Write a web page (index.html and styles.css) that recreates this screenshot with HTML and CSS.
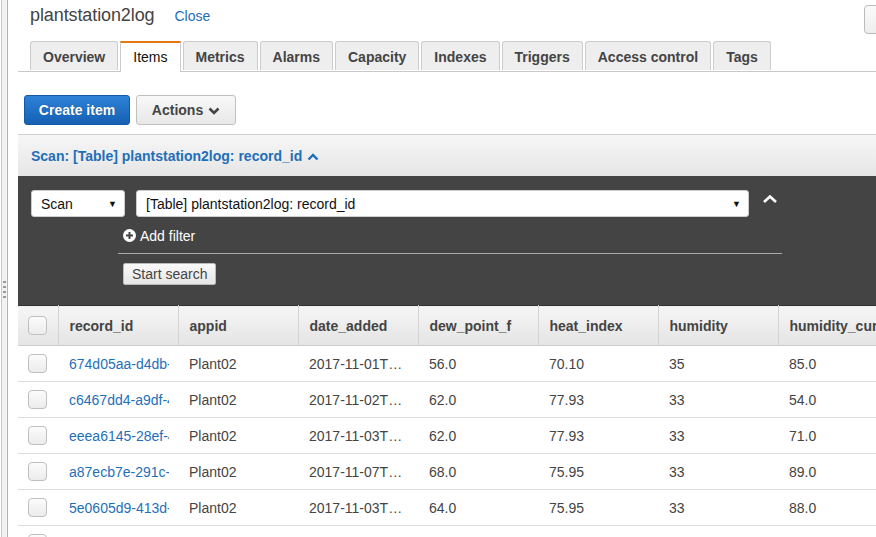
FILE: index.html
```html
<!DOCTYPE html>
<html>
<head>
<meta charset="utf-8">
<link rel="stylesheet" href="styles.css">
</head>
<body>
<div class="layout">
  <div class="splitter"><span class="grip"></span></div>
  <div class="main">
    <div class="header">
      <h1 class="title">plantstation2log</h1>
      <a class="close">Close</a>
      <span class="corner-btn"></span>
    </div>
    <div class="tabs">
      <div class="tab">Overview</div>
      <div class="tab active">Items</div>
      <div class="tab">Metrics</div>
      <div class="tab">Alarms</div>
      <div class="tab">Capacity</div>
      <div class="tab">Indexes</div>
      <div class="tab">Triggers</div>
      <div class="tab">Access control</div>
      <div class="tab">Tags</div>
    </div>
    <div class="toolbar">
      <button class="btn primary">Create item</button>
      <button class="btn secondary">Actions <svg class="chev" width="12" height="8" viewBox="0 0 12 8"><path d="M1.5 1.5 L6 6 L10.5 1.5" fill="none" stroke="#444" stroke-width="2.6"/></svg></button>
    </div>
    <div class="panel">
      <div class="scan-head">Scan: [Table] plantstation2log: record_id <svg class="up" width="12" height="8" viewBox="0 0 12 8"><path d="M1.5 6.5 L6 2 L10.5 6.5" fill="none" stroke="#1f6fb8" stroke-width="2.4"/></svg></div>
      <div class="scan-body">
        <div class="scan-row">
          <div class="select small"><span>Scan</span><span class="arrow">▼</span></div>
          <div class="select wide"><span>[Table] plantstation2log: record_id</span><span class="arrow">▼</span></div>
          <svg class="collapse" width="16" height="10" viewBox="0 0 16 10"><path d="M2 8 L8 2.5 L14 8" fill="none" stroke="#fff" stroke-width="2.6"/></svg>
        </div>
        <div class="filters">
          <div class="add-filter"><svg width="13" height="13" viewBox="0 0 13 13"><circle cx="6.5" cy="6.5" r="6.5" fill="#fff"/><path d="M6.5 3 V10 M3 6.5 H10" stroke="#444" stroke-width="2"/></svg><span>Add filter</span></div>
          <div class="start-wrap"><button class="start">Start search</button></div>
        </div>
      </div>
      <table class="grid">
        <thead>
          <tr>
            <th class="cb"><span class="check"></span></th>
            <th>record_id</th><th>appid</th><th>date_added</th><th>dew_point_f</th><th>heat_index</th><th>humidity</th><th>humidity_current</th>
          </tr>
        </thead>
        <tbody>
          <tr><td class="cb"><span class="check"></span></td><td class="link"><span>674d05aa-d4db-4a1c</span></td><td>Plant02</td><td>2017-11-01T…</td><td>56.0</td><td>70.10</td><td>35</td><td>85.0</td></tr>
          <tr><td class="cb"><span class="check"></span></td><td class="link"><span>c6467dd4-a9df-4b2e</span></td><td>Plant02</td><td>2017-11-02T…</td><td>62.0</td><td>77.93</td><td>33</td><td>54.0</td></tr>
          <tr><td class="cb"><span class="check"></span></td><td class="link"><span>eeea6145-28ef-4c3d</span></td><td>Plant02</td><td>2017-11-03T…</td><td>62.0</td><td>77.93</td><td>33</td><td>71.0</td></tr>
          <tr><td class="cb"><span class="check"></span></td><td class="link"><span>a87ecb7e-291c-4d5f</span></td><td>Plant02</td><td>2017-11-07T…</td><td>68.0</td><td>75.95</td><td>33</td><td>89.0</td></tr>
          <tr><td class="cb"><span class="check"></span></td><td class="link"><span>5e0605d9-413d-4e6a</span></td><td>Plant02</td><td>2017-11-03T…</td><td>64.0</td><td>75.95</td><td>33</td><td>88.0</td></tr>
          <tr><td class="cb"><span class="check"></span></td><td class="link"><span></span></td><td></td><td></td><td></td><td></td><td></td><td></td></tr>
        </tbody>
      </table>
    </div>
  </div>
</div>
</body>
</html>
```
FILE: styles.css
```css
html, body { margin: 0; padding: 0; background: #fff; }
body { width: 876px; height: 537px; overflow: hidden; font-family: "Liberation Sans", Arial, sans-serif; font-size: 14px; color: #444; }
.layout { display: flex; height: 537px; }
.splitter { width: 5px; flex: none; margin-left: 1px; border-left: 1px solid #c8c8c8; border-right: 1px solid #b4b4b4; background: #f2f2f2; display: flex; align-items: center; justify-content: center; }
.grip { width: 3px; height: 18px; margin-top: 42px; background: repeating-linear-gradient(#999 0 2px, transparent 2px 5px); }
.main { flex: 1; min-width: 0; padding-left: 10px; }
.header { display: flex; align-items: baseline; height: 36px; padding: 5px 0 0 12px; box-sizing: border-box; position: relative; }
.title { margin: 0; font-size: 18px; font-weight: normal; color: #444; letter-spacing: -0.1px; }
.close { margin-left: 20px; color: #1f6fb8; font-size: 14px; }
.corner-btn { margin-left: auto; margin-right: -40px; align-self: flex-start; margin-top: 0; width: 50px; height: 27px; border: 1px solid #bbb; border-radius: 4px; background: linear-gradient(#fafafa, #eee); }
.tabs { display: flex; gap: 2px; margin-top: 5px; padding-left: 12px; border-bottom: 1px solid #c8c8c8; height: 30px; }
.tab { height: 29px; padding: 0 12px; box-sizing: border-box; border: 1px solid #ccc; border-bottom: none; border-radius: 3px 3px 0 0; background: #eee; font-weight: bold; line-height: 30px; color: #444; white-space: nowrap; }
.tab.active { background: #fff; height: 31px; border-top: 2px solid #e47911; border-color: #e47911 #ccc #ccc; border-radius: 0; font-weight: normal; color: #111; line-height: 28px; padding: 0 12px; }
.toolbar { display: flex; gap: 6px; margin-top: 23px; padding-left: 6px; }
.btn { height: 30px; border-radius: 3px; font-family: inherit; font-size: 14px; font-weight: bold; padding: 0; box-sizing: border-box; white-space: nowrap; }
.btn.primary { width: 106px; color: #fff; background: linear-gradient(#2d82d8, #1560b3); border: 1px solid #1458a6; text-shadow: 0 0 1px rgba(0,0,0,0.3); }
.btn.secondary { width: 100px; color: #444; background: linear-gradient(#f8f8f8, #e8e8e8); border: 1px solid #c0c0c0; display: flex; align-items: center; justify-content: center; gap: 5px; }
.chev { margin-top: 1px; }
.panel { margin-top: 9px; width: 900px; }
.scan-head { height: 42px; box-sizing: border-box; border-top: 1px solid #d0d0d0; background: linear-gradient(#f6f6f6, #e6e6e6); padding: 13px 0 0 13px; font-size: 14px; font-weight: bold; color: #1f6fb8; }
.up { margin-left: 1px; }
.scan-body { background: #444; height: 129px; box-sizing: border-box; padding: 14px 0 0 13px; }
.scan-row { display: flex; align-items: flex-start; gap: 11px; }
.select { height: 27px; box-sizing: border-box; background: #fff; border: 1px solid #ccc; border-radius: 3px; display: flex; align-items: center; justify-content: space-between; padding: 0 7px 0 9px; font-size: 14px; color: #111; }
.select.small { width: 94px; }
.select.wide { width: 613px; }
.arrow { font-size: 9px; color: #111; }
.collapse { margin-left: 2px; margin-top: 4px; }
.filters { margin-left: 87px; width: 664px; }
.add-filter { display: flex; align-items: center; gap: 4px; color: #fff; font-size: 14px; padding: 12px 0 0 5px; height: 25px; box-sizing: border-box; }
.start-wrap { border-top: 1px solid #aaa; margin-top: 11px; padding: 9px 0 0 5px; }
.start { height: 22px; padding: 0 8px; font-family: inherit; font-size: 14px; color: #444; background: linear-gradient(#fafafa, #e6e6e6); border: 1px solid #bbb; border-radius: 2px; }
.grid { border-collapse: collapse; table-layout: fixed; width: 880px; border-top: 1px solid #333; }
.grid th, .grid td { text-align: left; padding: 0 11px; white-space: nowrap; overflow: hidden; }
.grid th { height: 40px; box-sizing: border-box; background: linear-gradient(#f6f6f6, #e4e4e4); font-weight: bold; color: #444; border-left: 1px solid #fff; border-right: 1px solid #d4d4d4; border-bottom: 1px solid #ccc; width: 120px; }
.grid th.cb, .grid td.cb { width: 40px; padding: 0 0 0 10px; }
.grid th.cb { border-left: none; }
.grid td { height: 36px; box-sizing: border-box; border-bottom: 1px solid #ddd; color: #444; }
.grid td.link span { display: block; width: 100px; overflow: hidden; color: #1f6fb8; }
.check { display: block; width: 17px; height: 17px; border: 1px solid #c0c0c0; border-radius: 4px; background: linear-gradient(#fbfbfb, #ececec); }
```
